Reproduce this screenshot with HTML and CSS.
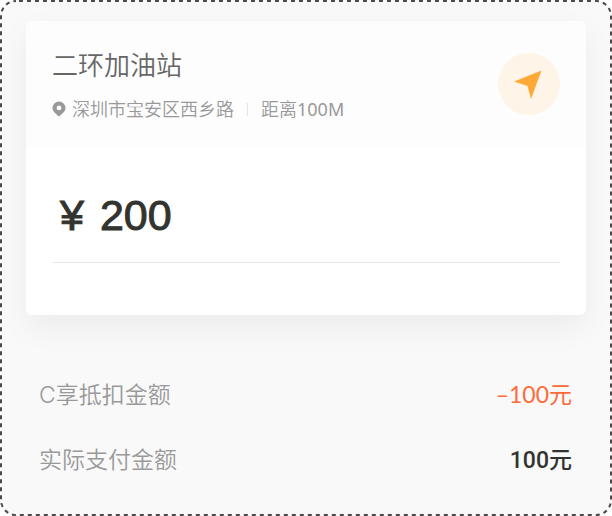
FILE: index.html
```
<!DOCTYPE html>
<html lang="zh-CN">
<head>
<meta charset="utf-8">
<meta name="viewport" content="width=device-width, initial-scale=1">
<title>二环加油站</title>
<link rel="stylesheet" href="styles.css">
</head>
<body>
<main class="panel">
  <svg class="outline" aria-hidden="true"><rect x="1" y="1" rx="15" ry="15"/></svg>
  <section class="card">
    <header class="station">
      <div class="info">
        <h1 class="name">二环加油站</h1>
        <p class="meta">
          <svg class="pin" viewBox="0 0 14 16" aria-hidden="true"><path fill-rule="evenodd" d="M7 .5a6.500 6.500 0 0 1 6.500 6.500c0 3-2.200 4.800-6.500 8.500C2.700 11.800.5 10 .5 7A6.500 6.500 0 0 1 7 .5zM7 4.500a2.400 2.400 0 1 0 0 4.800a2.400 2.400 0 0 0 0-4.800z"/></svg>
          <span>深圳市宝安区西乡路</span>
          <span class="divider"></span>
          <span>距离<span class="distance">100M</span></span>
        </p>
      </div>
      <button class="navigate" type="button" aria-label="导航">
        <svg viewBox="0 0 62 62" aria-hidden="true"><path d="M43.500 17.500 33 46 29.500 33 16 28.500z"/></svg>
      </button>
    </header>
    <div class="amount"><span class="currency">¥</span><span>200</span></div>
  </section>
  <dl class="summary">
    <div class="row"><dt>C享抵扣金额</dt><dd class="discount">–100元</dd></div>
    <div class="row"><dt>实际支付金额</dt><dd class="total">100元</dd></div>
  </dl>
</main>
</body>
</html>
```
FILE: styles.css
```
* { box-sizing: border-box; }
body {
  margin: 0;
  background: #fff;
  font-family: "Noto Sans", "Noto Sans CJK SC", sans-serif;
  font-weight: 350;
}
h1, p, dl, dd { margin: 0; font-weight: inherit; }
.panel {
  position: relative;
  min-height: 100vh;
  padding: 21px 26px 24px;
  border-radius: 16px;
  background: #f9f9f9;
}
.outline {
  position: absolute;
  inset: 0;
  width: 100%;
  height: 100%;
  pointer-events: none;
}
.outline rect {
  width: calc(100% - 2px);
  height: calc(100% - 2px);
  fill: none;
  stroke: #4c4948;
  stroke-width: 2px;
  stroke-dasharray: 4 4;
  stroke-dashoffset: -3px;
}
.card {
  border-radius: 6px;
  background: #fff;
  box-shadow: 0 12px 32px rgba(0, 0, 0, 0.06);
  padding-bottom: 52px;
}
.station {
  display: flex;
  justify-content: space-between;
  align-items: center;
  padding: 24px 26px 25px;
  border-radius: 6px 6px 0 0;
  background: #fdfdfd;
}
.name {
  font-size: 26px;
  line-height: 40px;
  color: #666;
}
.meta {
  display: flex;
  align-items: center;
  margin-top: 10px;
  font-size: 18px;
  line-height: 28px;
  color: #999;
}
.distance { font-weight: 400; }
.pin {
  width: 14px;
  height: 16px;
  margin-right: 6px;
  fill: #999;
}
.divider {
  width: 1px;
  height: 13px;
  margin: 0 13px;
  background: #e5e5e5;
}
.navigate {
  width: 62px;
  height: 62px;
  padding: 0;
  border: 0;
  border-radius: 50%;
  background: #fff4e8;
}
.navigate svg { display: block; fill: #ffaa38; }
.amount {
  display: flex;
  gap: 16px;
  margin: 0 26px;
  padding: 35px 8px 15px;
  border-bottom: 1px solid #e8e8e8;
  font-family: "Liberation Sans", Arial, sans-serif;
  font-size: 43px;
  font-weight: 400;
  line-height: 64px;
  color: #333330;
  -webkit-text-stroke: 1px #333330;
}
.summary { padding: 63px 14px 0 13px; }
.row {
  display: flex;
  justify-content: space-between;
  align-items: baseline;
  font-family: Inter, "Noto Sans CJK SC", sans-serif;
  font-size: 23px;
  line-height: 32px;
}
.row + .row { margin-top: 33px; }
.row dt { color: #999; }
.discount {
  font-family: Lato, "Noto Sans CJK SC", sans-serif;
  font-weight: 400;
  color: #ff6a38;
}
.total {
  font-family: Roboto, "Noto Sans CJK SC", sans-serif;
  font-weight: 500;
  color: #333330;
}
```
